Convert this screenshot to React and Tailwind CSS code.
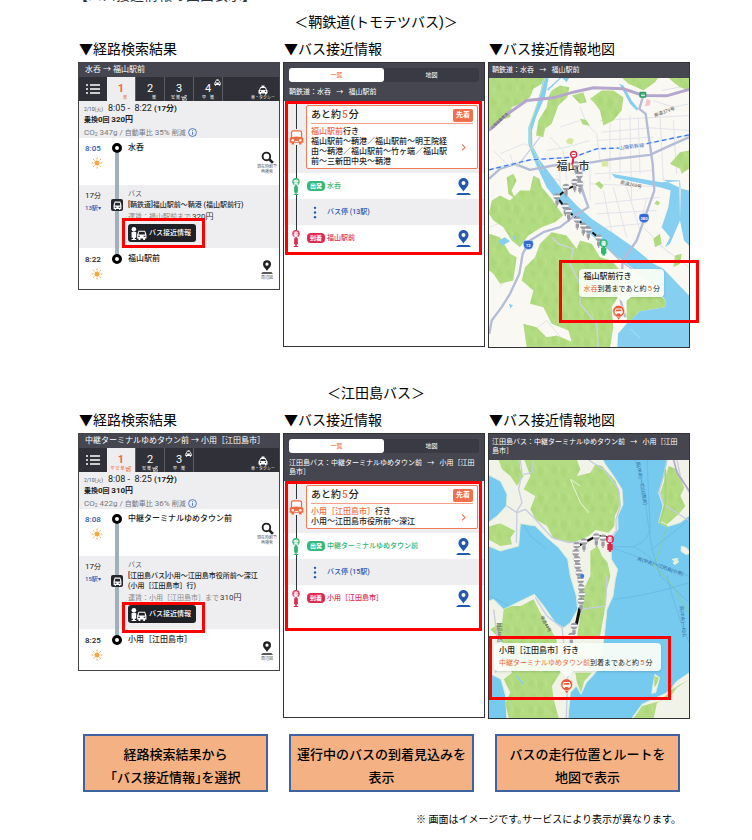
import clsx from "clsx";

const FONT = "font-['Roboto','Noto_Sans_CJK_JP',sans-serif]";

const routes = [
  {
    id: "tomotetsu",
    title: "＜鞆鉄道(トモテツバス)＞",
    header: "水呑 → 福山駅前",
    tabs: [
      { no: "1", marks: "　　楽" },
      { no: "2", marks: "　　楽" },
      { no: "3", marks: "安 楽", leaf: true },
      { no: "4", marks: "早　楽", car: true },
    ],
    depart: "8:05",
    arrive: "8:22",
    fare: "320円",
    co2: "347g",
    ratio: "35%",
    from: "水呑",
    to: "福山駅前",
    stops: "13",
    line: ["[鞆鉄道]福山駅前～鞆港 (福山駅前行)"],
    fareLabel: "運賃：福山駅前まで",
    nearHeader: "鞆鉄道：水呑 \u00a0\u00a0→ \u00a0\u00a0福山駅前",
    via: "福山駅前～鞆港／福山駅前～明王院経由～鞆港／福山駅前～竹ヶ端／福山駅前～三新田中央～鞆港",
  },
  {
    id: "etajima",
    title: "＜江田島バス＞",
    header: "中継ターミナルゆめタウン前 → 小用［江田島市］",
    tabs: [
      { no: "1", marks: "早 安 楽", leaf: true },
      { no: "2", marks: "安 楽", leaf: true },
      { no: "3", marks: "早　楽", car: true },
    ],
    depart: "8:08",
    arrive: "8:25",
    fare: "310円",
    co2: "422g",
    ratio: "36%",
    from: "中継ターミナルゆめタウン前",
    to: "小用［江田島市］",
    stops: "15",
    line: ["[江田島バス]小用～江田島市役所前～深江", "(小用［江田島市］行)"],
    fareLabel: "運賃：小用［江田島市］まで",
    nearHeader: "江田島バス：中継ターミナルゆめタウン前 \u00a0\u00a0→ \u00a0\u00a0小用［江田島市］",
    via: "小用～江田島市役所前～深江",
  },
];

const steps = [
  ["経路検索結果から", "「バス接近情報」を選択"],
  ["運行中のバスの到着見込みを", "表示"],
  ["バスの走行位置とルートを", "地図で表示"],
];

function CarIcon({ className }) {
  return (
    <svg viewBox="0 0 20 20" className={className} fill="currentColor" aria-hidden="true">
      <path d="M7 1h6v3H7z" />
      <path
        fillRule="evenodd"
        d="M5 4h10l3 6 1 1v6h-2v2h-3v-2H6v2H3v-2H1v-6l1-1zM6 6l-2 4h12l-2-4zM3.500 12.500a1.500 1.500 0 1 0 3 0 1.500 1.500 0 0 0-3 0zM13.500 12.500a1.500 1.500 0 1 0 3 0 1.500 1.500 0 0 0-3 0z"
      />
    </svg>
  );
}

function BusIcon({ className }) {
  return (
    <svg viewBox="0 0 24 24" className={className} aria-hidden="true">
      <path d="M3 12V5q0-4 4-4h10q4 0 4 4v7l2 2v7h-3v3h-4v-3H8v3H4v-3H1v-7z" fill="currentColor" />
      <path d="M5 12V5q0-2 2-2h10q2 0 2 2v7q-7-2-14 0z" fill="#fff" />
      <circle cx="6" cy="17" r="2" fill="#fff" />
      <circle cx="18" cy="17" r="2" fill="#fff" />
      <path d="M9 19h6" stroke="#fff" strokeWidth="1.500" />
    </svg>
  );
}

function SunIcon() {
  return (
    <svg viewBox="0 0 24 24" className="h-[12px] w-[12px] text-[#f5a742]" aria-hidden="true">
      <circle cx="12" cy="12" r="5" fill="currentColor" />
      <path
        d="M12 1v4M12 19v4M1 12h4M19 12h4M4 4l3 3M17 17l3 3M4 20l3-3M17 7l3-3"
        stroke="currentColor"
        strokeWidth="1.800"
      />
    </svg>
  );
}

function PinIcon({ className }) {
  return (
    <svg viewBox="0 0 30 34" className={className} fill="currentColor" aria-hidden="true">
      <path
        fillRule="evenodd"
        d="M15 0a10 10 0 0 1 10 10c0 7-7 11-10 17C12 21 5 17 5 10A10 10 0 0 1 15 0zm0 6a4 4 0 1 0 0 8 4 4 0 0 0 0-8z"
      />
      <path d="M0 34l4-4h22l4 4z" />
    </svg>
  );
}

function LeafIcon({ className }) {
  return (
    <svg viewBox="0 0 14 14" className={className} fill="none" stroke="currentColor" strokeWidth="1.500" aria-hidden="true">
      <path d="M1 4l4 2 3-4 5-1-2 5 2 6H3l1-4zM5 6l6 0M5 12l5-7" />
    </svg>
  );
}

function StopPost({ label, className }) {
  return (
    <svg viewBox="0 0 20 46" className={className} aria-hidden="true">
      <circle cx="10" cy="10" r="10" fill="currentColor" />
      <circle cx="10" cy="10" r="7" fill="#fff" opacity="0.300" />
      <text x="10" y="15" fontSize="13" fontWeight="700" textAnchor="middle" fill="#fff">{label}</text>
      <path d="M8 19h4v3h3v17h-3v4h4v3H4v-3h4v-4H5V22h3z" fill="currentColor" />
    </svg>
  );
}

function Ring() {
  return <span className="h-[10px] w-[10px] shrink-0 rounded-full border-[3px] border-black bg-white" />;
}

function Rail({ className }) {
  return <span className={clsx("w-[4px]", className)} />;
}

function SearchResult({ route }) {
  const second = route.line.length > 1;
  return (
    <article className="border border-[#444] bg-white text-[#222]">
      <p className="h-[14px] whitespace-nowrap bg-[#45464f] pl-[6px] text-[8px] leading-[13px] text-white">{route.header}</p>

      <nav className="flex h-[24px] bg-[#303138] text-white">
        <button type="button" aria-label="一覧" className="flex w-[28px] shrink-0 items-center justify-center">
          <svg viewBox="0 0 14 10" className="h-[10px] w-[14px]" stroke="currentColor" strokeWidth="1.500" aria-hidden="true">
            <path d="M0 1h2M4 1h10M0 5h2M4 5h10M0 9h2M4 9h10" />
          </svg>
        </button>
        {route.tabs.map((tab, i) => (
          <button
            key={tab.no}
            type="button"
            className={clsx(
              "relative w-[29px] shrink-0 border-r border-[#5c5d64]",
              i === 0 ? "bg-[#eeeef1] text-[#ee6a42]" : "text-white"
            )}
          >
            <span className={clsx("block pt-[4px] text-[11px] leading-[13px]", i === 0 && "font-bold")}>{tab.no}</span>
            <span className="flex h-[6px] items-center justify-center whitespace-pre text-[4px] leading-[6px]">
              {tab.marks}
              {tab.leaf ? <LeafIcon className="ml-px h-[6px] w-[6px]" /> : null}
            </span>
            {tab.car ? <CarIcon className="absolute right-[1px] top-[2px] h-[7px] w-[7px]" /> : null}
          </button>
        ))}
        <button type="button" className="ml-auto flex w-[32px] flex-col items-center pt-[8px]">
          <CarIcon className="h-[10px] w-[10px]" />
          <span className="whitespace-nowrap text-[4px] leading-[6px]">車・タクシー</span>
        </button>
      </nav>

      <div className="h-[37px] whitespace-nowrap bg-[#eeeef1] pl-[5px] pt-[2px]">
        <p className="text-[9px] leading-[11px]">
          <span className="mr-[5px] text-[5px] text-[#555]">2/10(火)</span>
          {route.depart} -&nbsp; {route.arrive} <span className="text-[8px] font-bold">(17分)</span>
        </p>
        <p className="text-[7px] font-bold leading-[10px]">
          乗換<span className="text-[8px]">0</span>回 <span className="text-[8px]">{route.fare}</span>
        </p>
        <p className="flex items-center text-[7px] leading-[12px] text-[#777]">
          <span className="text-[8px]">CO</span>
          <span className="pt-[3px] text-[5px]">2</span>
          <span className="mx-[2px] text-[8px]">{route.co2} /</span>
          自動車比 <span className="mx-[2px] text-[8px]">{route.ratio}</span> 削減
          <svg viewBox="0 0 16 16" className="ml-[2px] h-[9px] w-[9px] text-[#3566c8]" fill="none" stroke="currentColor" strokeWidth="1.500" aria-hidden="true">
            <circle cx="8" cy="8" r="7" />
            <path d="M8 7v5M8 4v1.500" />
          </svg>
        </p>
      </div>

      <div className="flex h-[47px] pl-[6px]">
        <div className="w-[26px] shrink-0 pt-[5px]">
          <p className="text-[8px] font-medium leading-[11px] text-[#2b5cb5]">{route.depart}</p>
          <div className="pl-[6px] pt-[3px]"><SunIcon /></div>
        </div>
        <div className="flex w-[12px] shrink-0 flex-col items-center pt-[5px]">
          <Ring />
          <Rail className="flex-1 bg-[#9fb0ba]" />
        </div>
        <p className="min-w-0 flex-1 whitespace-nowrap pl-[5px] pt-[4px] text-[8px] font-medium leading-[12px]">{route.from}</p>
        <button type="button" className="flex w-[24px] shrink-0 flex-col items-center pt-[13px]">
          <svg viewBox="0 0 24 24" className="h-[13px] w-[13px]" fill="none" stroke="currentColor" aria-hidden="true">
            <circle cx="10" cy="10" r="7" strokeWidth="3.500" />
            <path d="M15 15l7 7" strokeWidth="5" />
          </svg>
          <span className="whitespace-nowrap text-[4px] leading-[5px] text-[#555]">現在時刻で<br />再検索</span>
        </button>
      </div>

      <div className="flex bg-[#eeeef1] pb-[6px] pl-[6px]">
        <div className="w-[26px] shrink-0 pt-[5px] leading-[11px]">
          <p className="text-[8px]">17<span className="text-[7px]">分</span></p>
          <p className="whitespace-nowrap text-[6px] font-medium text-[#2b5cb5]">{route.stops}駅▾</p>
        </div>
        <div className="-mb-[6px] flex w-[12px] shrink-0 flex-col items-center">
          <Rail className={second ? "h-[19px] bg-[#9fb0ba]" : "h-[14px] bg-[#9fb0ba]"} />
          <span className="flex h-[12px] w-[12px] items-center justify-center rounded-[2px] bg-[#25262c] text-[#25262c]">
            <svg viewBox="0 0 16 16" className="h-[9px] w-[9px]" aria-hidden="true">
              <path d="M3 1h10l2 6v7h-2v2h-2v-2H5v2H3v-2H1V7z" fill="#fff" />
              <path d="M4 3h8l1 5H3z" fill="currentColor" />
              <path d="M3 11h3M10 11h3" stroke="currentColor" strokeWidth="2" />
            </svg>
          </span>
          <Rail className="flex-1 bg-[#9fb0ba]" />
        </div>
        <div className="min-w-0 flex-1 whitespace-nowrap pl-[5px] pt-[4px] text-[7px] leading-[10px]">
          <p className="text-[#666]">バス</p>
          <p className="mt-px font-medium">
            {route.line.map((text) => <span key={text} className="block">{text}</span>)}
          </p>
          <p className="mt-[2px] text-[#888]">{route.fareLabel}<span className="ml-px text-[8px] text-[#333]">{route.fare}</span></p>
          <div className="relative mt-[2px] w-fit">
            <button type="button" className="flex h-[18px] w-[68px] items-center gap-[2px] rounded-[3px] bg-[#202127] pl-[3px] text-white">
              <svg viewBox="0 0 34 28" className="h-[13px] w-[16px] shrink-0" fill="#fff" aria-hidden="true">
                <circle cx="6" cy="5" r="5" />
                <path d="M1 11h10v12H8v3h3v2H1v-2h3v-3H1z" />
                <path fillRule="evenodd" d="M16 8h14l3 8v9h-3v3h-4v-3h-6v3h-4v-3h-3v-9zm1 2l-1 6h14l-1-6zm-2 9v2h4v-2zm12 0v2h4v-2z" />
              </svg>
              <span className="text-[7px] font-medium leading-[10px]">バス接近情報</span>
            </button>
            <span
              className={clsx(
                "absolute -left-[6px] -right-[9px] border-[3px] border-[#f00]",
                second ? "-bottom-[10px] -top-[3px]" : "-bottom-[6px] -top-[6px]"
              )}
            />
          </div>
        </div>
      </div>

      <div className="flex h-[41px] pl-[6px]">
        <div className="w-[26px] shrink-0 pt-[6px]">
          <p className="text-[8px] font-medium leading-[11px]">{route.arrive}</p>
          <div className="pl-[6px] pt-[3px]"><SunIcon /></div>
        </div>
        <div className="flex w-[12px] shrink-0 flex-col items-center">
          <Rail className="h-[6px] bg-[#9fb0ba]" />
          <Ring />
        </div>
        <p className="min-w-0 flex-1 whitespace-nowrap pl-[5px] pt-[5px] text-[8px] font-medium leading-[12px]">{route.to}</p>
        <button type="button" className="flex w-[24px] shrink-0 flex-col items-center pt-[12px]">
          <PinIcon className="h-[14px] w-[12px]" />
          <span className="text-[4px] leading-[7px] text-[#555]">周辺図</span>
        </button>
      </div>
    </article>
  );
}

function StopRow({ kind, label, name }) {
  const start = kind === "start";
  return (
    <div className={clsx("flex h-[26px] items-center pl-[2px] pr-[13px]", start ? "text-[#2fb573]" : "text-[#dd2b50]")}>
      <div className="flex w-[20px] shrink-0 flex-col items-center self-stretch">
        <span className="w-px flex-1 bg-[#333]" />
        <StopPost label={start ? "発" : "着"} className="h-[17px] w-[8px]" />
        <span className={clsx("w-px flex-1", start && "bg-[#333]")} />
      </div>
      <span
        className={clsx(
          "ml-px flex h-[10px] w-[18px] shrink-0 items-center justify-center rounded-[4px] text-[6px] font-bold leading-[10px] text-white",
          start ? "bg-[#35b878]" : "bg-[#dd2b50]"
        )}
      >
        {label}
      </span>
      <span className="ml-[2px] flex-1 whitespace-nowrap text-[7px] font-medium leading-[10px]">{name}</span>
      <button type="button" aria-label={`${name}の地図`} className="text-[#2458ae]">
        <PinIcon className="h-[17px] w-[15px]" />
      </button>
    </div>
  );
}

function Approach({ route }) {
  return (
    <article className="flex h-[285px] flex-col border border-[#333] bg-white">
      <header className="bg-[#45464f] px-[5px] pb-[4px] pt-[5px] text-white">
        <div className="flex h-[14px] rounded-[3px] bg-[#393a43] text-[6px] leading-[14px]">
          <button type="button" className="flex-1 rounded-[3px] bg-white font-medium text-[#ee6a42]">一覧</button>
          <button type="button" className="flex-1">地図</button>
        </div>
        <p className="mt-[6px] pr-[3px] text-[7px] leading-[9px]">{route.nearHeader}</p>
      </header>

      <div className={clsx("relative", route.id === "etajima" && "pb-[16px]")}>
        <div className="flex bg-[#eeeef1] pl-[2px] pr-[6px]">
          <div className="flex w-[20px] shrink-0 flex-col items-center">
            <span className="w-px flex-1 bg-[#333]" />
            <BusIcon className="h-[16px] w-[15px] text-[#ee6a42]" />
            <span className="w-px flex-1 bg-[#333]" />
          </div>
          <div className="my-[4px] min-w-0 flex-1 rounded-[2px] border border-[#ee7a58] bg-white px-[4px] pb-px pt-[2px] text-[#222]">
            <div className="flex h-[16px] items-center justify-between border-b border-[#f4a08a] pb-px">
              <p className="text-[10px] font-medium leading-[12px]">あと約<span className="mx-px text-[#ee6a42]">5</span>分</p>
              <span className="rounded-[2px] bg-[#f0704c] px-[3px] text-[7px] font-bold leading-[13px] text-white">先着</span>
            </div>
            <div className="flex items-center pt-[3px]">
              <p className="w-[142px] text-[8px] font-medium leading-[10px]">
                <span className="text-[#ee6a42]">{route.to}</span>行き
                <br />
                {route.via}
              </p>
              <svg viewBox="0 0 6 10" className="ml-[8px] h-[7px] w-[5px]" fill="none" stroke="#ee6a42" strokeWidth="1.500" aria-hidden="true">
                <path d="M1 1l4 4-4 4" />
              </svg>
            </div>
          </div>
        </div>
        <StopRow kind="start" label="出発" name={route.from} />
        <div className="flex h-[26px] items-center bg-[#eeeef1] pl-[2px] text-[#2458ae]">
          <div className="flex w-[20px] justify-center self-stretch">
            <span className="w-px bg-[#333]" />
          </div>
          <svg viewBox="0 0 4 14" className="ml-[7px] h-[13px] w-[4px]" fill="currentColor" aria-hidden="true">
            <circle cx="2" cy="2" r="1.300" />
            <circle cx="2" cy="7" r="1.300" />
            <circle cx="2" cy="12" r="1.300" />
          </svg>
          <span className="ml-[10px] text-[7px] font-medium leading-[10px]">バス停 ({route.stops}駅)</span>
        </div>
        <StopRow kind="end" label="到着" name={route.to} />
        <span className="absolute -bottom-[4px] left-[1px] right-[2px] top-0 border-[3px] border-[#f00]" />
      </div>
    </article>
  );
}

function HillPattern({ id }) {
  return (
    <pattern id={id} width="70" height="80" patternUnits="userSpaceOnUse">
      <rect width="70" height="80" fill="#b3dc82" />
      <path d="M8 4l12 14-5 20-12-12zM34 10l16 12-6 26-14-18zM54 44l12 10-6 20-12-12zM14 48l14 8-4 18-14-10z" fill="#a8d375" opacity="0.600" />
      <path d="M22 6l8 12-2 14zM52 8l10 14-4 14zM38 56l8 8-4 12z" fill="#bee292" opacity="0.700" />
    </pattern>
  );
}

function GrayStop({ x, y }) {
  return (
    <g transform={`translate(${x} ${y})`}>
      <circle r="10" fill="#9c9da4" />
      <path d="M-10-3h20v5h-20z" fill="#fff" />
      <path d="M-5 11H5v13H2v6h-4v-6h-3z" fill="#9c9da4" />
    </g>
  );
}

function BusMarker({ x, y }) {
  return (
    <g transform={`translate(${x} ${y})`}>
      <path d="M0 26L-10 12H10z" fill="#ea5a38" />
      <circle r="18" fill="#ea5a38" stroke="#fff" strokeWidth="2" />
      <path d="M-9-8H9l3 7v8h-3v3H5V7H-5v3h-4V7h-3v-8z" fill="#fff" />
      <path d="M-7-5H7l2 5H-9z" fill="#ea5a38" />
    </g>
  );
}

function ColorStop({ x, y, color, label }) {
  return (
    <g transform={`translate(${x} ${y})`}>
      <path d="M-4 10h8v4h4v18H4v5h-8v-5h-4V14h4z" fill={color} />
      <circle r="12" fill={color} />
      <circle r="8" fill="#fff" opacity="0.300" />
      <text y="5" fontSize="13" fontWeight="700" textAnchor="middle" fill="#fff">{label}</text>
    </g>
  );
}

function RoadBadge({ x, y, text }) {
  return (
    <g transform={`translate(${x} ${y})`}>
      <path d="M-13-12Q0-16 13-12 18 0 11 10 0 18-11 10-18 0-13-12z" fill="#2e69d8" stroke="#fff" />
      <text y="5" fontSize="12" fontWeight="700" textAnchor="middle" fill="#fff">{text}</text>
    </g>
  );
}

const fukuyamaStops = [
  [288, 372], [298, 404], [284, 425], [300, 430], [258, 440], [231, 468],
  [256, 497], [266, 512], [292, 538], [310, 556], [325, 568], [356, 592],
];

function FukuyamaMap() {
  return (
    <svg viewBox="27 111 600 810" preserveAspectRatio="xMidYMid slice" className="absolute inset-0 h-full w-full" role="img" aria-label="福山市の地図">
      <defs><HillPattern id="hill-fukuyama" /></defs>
      <rect x="0" y="80" width="660" height="880" fill="#faf8f2" />

      <g fill="none" stroke="#e3e4ec" strokeWidth="3">
        <path d="M360 240L627 225M365 275L510 262 627 270M350 300L520 290M390 235V420M420 230V400M450 225L455 480M475 230L480 400M540 230L550 420M580 240L590 400M345 400L520 390M330 430L560 440M370 450L400 600M400 440L440 590M440 440L480 570M345 490L540 470M350 520L530 510M375 560L500 548M300 200L320 250 350 280 360 360M60 340L130 310 160 320M40 330L80 370M90 340L100 370M200 330L260 320 330 300M210 290L250 330 260 420M490 560L570 640M520 600L627 680M450 640L560 700" />
        <path d="M545 150L600 140M520 180L580 200 627 190M240 260L300 240M180 400L240 420M240 380V440M330 380V480M500 470L490 520M30 560L100 530 150 545M40 640L90 700 60 740M150 880L200 840 250 900" />
      </g>

      <g fill="url(#hill-fukuyama)">
        <path d="M27 111H190L186 130 160 145 150 170 120 190 95 200 90 230 60 240 45 260 27 270z" />
        <path d="M215 150L240 135 268 140 262 170 235 195 215 250 195 265 190 290 168 285 175 240 200 200 205 170z" />
        <path d="M330 175L365 150 400 150 430 170 425 210 400 240 370 255 360 210 345 190z" />
        <path d="M425 111H535L525 125 490 150 470 140 445 130zM565 111H627V150L600 140 580 125zM275 165L310 155 320 185 300 190zM300 235l18 3 12 18-22-4z" />
        <path d="M570 370L600 335 627 330V385L605 400 600 385zM345 430l12-8 14 14-8 10z" />
        <path d="M80 410L100 400 110 420 95 450 105 475 85 460z" />
        <path d="M160 405L178 415 185 440 215 475 232 500 250 525 225 545 185 560 145 585 120 620 95 600 70 560 40 540 27 520 35 480 60 465 90 480 120 450 150 450z" />
        <path d="M27 580L60 590 90 640 110 650 100 720 60 730 40 700 27 690z" />
        <path d="M215 575L260 585 290 625 300 600 335 610 360 650 395 660 420 690 420 760 395 800 400 860 390 921H280L265 870 215 850 190 800 150 790 160 750 125 720 135 680 165 650 180 610z" />
        <path d="M130 850L170 860 200 890 230 885 280 905 285 921H140zM530 480l10 5-5 10-12-5z" />
        <path d="M440 775L490 755 540 765 557 780 555 800 480 812 440 850zM520 595L540 580 545 610 525 620zM585 645L605 640 600 670 580 680z" />
      </g>

      <g fill="#86cff0">
        <path d="M190 111H206L196 165 168 230 156 270 157 315 182 362 212 402 248 450 290 495 335 535 400 578 460 620 520 670 550 685 627 765V921H412L414 880 440 850 480 812 555 800 557 780 530 745 480 700 400 640 330 580 275 525 235 485 200 440 168 372 145 310 145 260 160 225 182 150z" />
        <path d="M550 418L600 420 602 450 600 540 612 600 627 615V570 450L605 445zM543 425L395 400 405 412 540 440 572 450 565 500 545 560 570 590 555 620 570 610 600 540 598 422z" />
        <path d="M430 135L447 165 455 180 475 205 470 210 450 190 418 130zM55 600l20-10 15 12-25 14zM96 585l12 4-5 10zM87 790l12 4-8 10zM260 125L245 111 205 150 200 148 240 111h28z" />
      </g>
      <path d="M195 111L175 180 150 250 150 310 190 390" fill="none" stroke="#bfe5ba" strokeWidth="3" />
      <path d="M450 865L480 892" stroke="#bfe4f5" strokeWidth="2" />

      <g fill="none" stroke="#b4bcd7" strokeWidth="7" strokeLinejoin="round">
        <path d="M27 415L60 385 105 370 150 388 220 375 320 368 390 357 510 343 560 320 627 290" />
        <path d="M490 165L478 205 497 220 508 300 518 370 523 450 495 530 470 600 428 660 422 780 436 830" />
        <path d="M300 430L310 460 325 500 285 525 240 560 190 575 150 600 128 640 118 700 90 760 65 800 35 840 28 880" />
        <path d="M325 500L300 420 310 380M350 590L420 660 560 760" strokeWidth="4" />
        <path d="M216 590L235 610 280 625 270 670 300 730 300 790 350 850 355 921M110 380L180 290" stroke="#ccd1e4" strokeWidth="4" />
      </g>
      <path d="M27 270L80 222 140 180 220 172 280 155 340 142 430 145 490 165 560 166 627 147" fill="none" stroke="#b5a6cd" strokeWidth="9" />
      <path d="M27 388L150 358 280 350 350 325 440 322 627 283" fill="none" stroke="#dbe7ff" strokeWidth="5" />
      <path d="M27 388L150 358 280 350 350 325 440 322 627 283" fill="none" stroke="#3e7cea" strokeWidth="4" strokeDasharray="14 9" />
      <path d="M257 300l12-8 13 5-6 15-15-3zM365 362h20v16h-20z" fill="#d8e8a0" />

      <path d="M500 175l12 5-3 15-14 2z" fill="#f5c4cd" />
      <rect x="478" y="154" width="21" height="18" rx="4" fill="#28a065" />
      <path d="M483 165h12M486 159v9M492 159v9" stroke="#fff" strokeWidth="2" />

      <text x="279" y="387" fontSize="33" fontWeight="500" textAnchor="middle" fill="#333" stroke="#fff" strokeWidth="3" paintOrder="stroke">福山市</text>
      <text x="418" y="328" fontSize="15" fill="#3d6fc9" stroke="#faf8f2" strokeWidth="5" paintOrder="stroke" transform="rotate(-7 418 328)">山陽新幹線</text>
      <text x="524" y="230" fontSize="14" fill="#555" transform="rotate(-20 524 230)">県道379号</text>
      <text x="420" y="430" fontSize="14" fill="#555" transform="rotate(12 420 430)">県道260号</text>
      <text x="36" y="266" fontSize="11" fill="#555" transform="rotate(-42 36 266)">山陽自動車道</text>
      <RoadBadge x={145} y={613} text="72" />
      <RoadBadge x={492} y={533} text="380" />

      <path d="M290 380L298 430 262 445 231 470 262 510 356 592 371 610" fill="none" stroke="#111" strokeWidth="6" strokeDasharray="26 9" />
      {fukuyamaStops.map(([x, y]) => <GrayStop key={`${x}-${y}`} x={x} y={y} />)}
      <path d="M280 352l-3 20" stroke="#de2447" strokeWidth="6" />
      <circle cx="281" cy="342" r="9" fill="#fff" stroke="#de2447" strokeWidth="4" />
      <path d="M277 342h8" stroke="#de2447" strokeWidth="3" />
      <ColorStop x={371} y={608} color="#2eb872" label="発" />
      <BusMarker x={416} y={812} />
    </svg>
  );
}

const etajimaStops = [
  [348, 382], [368, 386], [311, 397], [289, 408], [286, 430], [290, 450],
  [292, 470], [296, 490], [301, 512], [303, 535], [304, 555], [302, 575], [281, 650], [273, 680],
];

function EtajimaMap() {
  return (
    <svg viewBox="24 152 604 774" preserveAspectRatio="xMidYMid slice" className="absolute inset-0 h-full w-full" role="img" aria-label="江田島市の地図">
      <defs><HillPattern id="hill-etajima" /></defs>
      <rect x="0" y="120" width="660" height="840" fill="#76c9ef" />

      <g fill="#f1f3e8" stroke="#d9ecdc" strokeWidth="3">
        <path d="M10 120H350L375 165 400 200 425 240 428 285 412 320 413 360 398 380 392 410 393 450 412 480 405 510 398 560 380 600 372 680 355 780 318 820 302 855 288 830 270 850 262 940H80L76 860 62 810 24 790 10 580 40 570 70 600 110 580 162 555 190 590 225 640 250 655 270 640 292 600 288 560 270 500 262 450 235 415 200 385 165 350 120 343 115 410 60 425 24 410 10 350 50 320 78 290 80 255 60 215 10 190z" />
        <path d="M563 140H650V300L600 340 560 352 535 340 548 290 535 250 550 200z" />
        <path d="M627 790L590 815 560 850 485 885 445 940H650z" />
        <path d="M603 410l15 5 12 15-12 6-16-10zM578 460l12-10 5 8-12 8zM524 795l14 10-12 45-12 2 4-25zM575 450l18-3-5 12z" />
      </g>

      <g fill="url(#hill-etajima)">
        <path d="M132 152H290L300 180 290 200 330 190 345 165 365 170 405 215 418 250 420 285 404 320 402 350 385 370 345 362 325 380 280 400 220 390 200 350 165 330 150 300 165 260 130 240 150 200z" />
        <path d="M55 152H118L120 180 130 200 110 230 90 200 65 180z" />
        <path d="M24 352L60 342 105 365 90 385 95 405 60 410 24 390z" />
        <path d="M330 425L352 410 365 440 382 460 390 500 380 540 375 590 370 620 358 685H290L303 600 310 540 330 500z" />
        <path d="M70 600L95 590 120 590 160 570 180 610 205 650 228 690 240 790 215 830 220 870 235 926H85L75 880 90 850 70 810 95 790 80 720 60 690z" />
        <path d="M285 790H335L312 815 302 850 290 820zM30 660L60 640 70 670 50 680z" />
        <path d="M565 170L590 180 612 235 600 260 615 290 595 315 560 345 538 335 552 290 540 250 552 215z" />
        <path d="M627 810L590 835 570 860 530 880 520 926H460L485 890 540 875 575 840zM522 800l14 5-8 22-6 6z" />
      </g>

      <g fill="none" stroke="#c7cce2" strokeWidth="4">
        <path d="M120 152L125 190 115 240 125 280 110 305 108 400M80 290L110 310 135 300 165 330 215 385 265 400 300 398M160 152L155 190 130 195" />
        <path d="M325 152L375 185 415 240 420 290 407 330 408 365 390 385M300 600L375 590 380 500M165 565L200 620 245 655 262 800 258 926M40 600L60 760 45 790" />
        <path d="M560 152L550 200 537 245 550 285 627 335M590 152L600 200 627 250" />
      </g>
      <path d="M580 152L590 190 627 245" fill="none" stroke="#b5a6cd" strokeWidth="5" />
      <path d="M560 350L535 430 522 470 570 520 627 610" fill="none" stroke="#82cdb0" strokeWidth="4" />
      <path d="M555 180V280L538 340 560 350" fill="none" stroke="#a4d678" strokeWidth="5" />
      <path d="M300 230L270 210 300 280 325 310" fill="none" stroke="#e9f2da" strokeWidth="3" />
      <path d="M108 800L130 825" stroke="#8bcfe4" strokeWidth="5" />

      <g fill="none" stroke="#5aafdd" strokeWidth="1.500">
        <path d="M465 152L490 230 503 340 515 420 540 500 627 580M395 412H460Q500 395 508 365M460 412Q500 430 545 480M395 415L627 500M400 570Q500 560 627 520M510 370L500 152M515 420L627 330M560 500Q590 620 627 700M30 560L85 590M130 345L150 380 200 420" />
      </g>
      <g fill="#2f6ba3" fontSize="14">
        <text x="468" y="158" transform="rotate(80 468 158)">呉(中央)～松山(高浜)</text>
        <text x="470" y="452" transform="rotate(19 470 452)">呉(中央)～江田島(小用)</text>
        <text x="598" y="590" transform="rotate(84 598 590)">呉(中央)～松山</text>
      </g>
      <text x="54" y="640" fontSize="13" fill="#555" transform="rotate(90 54 640)">国道487号</text>
      <text x="180" y="622" fontSize="13" fill="#555" transform="rotate(62 180 622)">県道44号</text>

      <path d="M388 390L370 380 345 382 310 400 290 412" fill="none" stroke="#111" strokeWidth="7" />
      <path d="M299 595L288 645" stroke="#111" strokeWidth="9" />
      {etajimaStops.map(([x, y]) => <GrayStop key={`${x}-${y}`} x={x} y={y} />)}
      <circle cx="306" cy="500" r="6" fill="#2e7ae8" />
      <ColorStop x={389} y={390} color="#de2447" label="着" />
      <BusMarker x={259} y={826} />
    </svg>
  );
}

function MapPanel({ route }) {
  const fukuyama = route.id === "tomotetsu";
  return (
    <article className="flex h-[286px] flex-col border border-[#333] bg-white">
      <p className={clsx("bg-[#45464f] pl-[3px] pr-[8px] text-[7px] leading-[9px] text-white", fukuyama ? "py-[3px]" : "py-[4px]")}>
        {route.nearHeader}
      </p>
      <div className="relative flex-1">
        {fukuyama ? <FukuyamaMap /> : <EtajimaMap />}
        <div
          className={clsx(
            "absolute whitespace-nowrap rounded-[4px] bg-[#f8fdf5]/95 py-[2px] pl-[5px] text-[#222] shadow-sm",
            fukuyama ? "bottom-[50px] right-[25px] pr-[4px]" : "bottom-[47px] left-[5px] pr-[9px]"
          )}
        >
          <p className="text-[8px] font-medium leading-[12px]">{route.to}行き</p>
          <p className="text-[7px] leading-[11px]">
            <span className="text-[#ee6a42]">{route.from}</span>到着まであと約<span className="mx-px text-[8px] text-[#ee6a42]">5</span>分
          </p>
          <svg
            viewBox="0 0 14 6"
            className={clsx("absolute -bottom-[6px] h-[6px] w-[14px]", fukuyama ? "left-[38px]" : "left-[66px]")}
            aria-hidden="true"
          >
            <path d="M0 0h14L7 6z" fill="#f8fdf5" />
          </svg>
        </div>
        <span
          className={clsx(
            "absolute border-[3px] border-[#f00]",
            fukuyama ? "-right-[10px] bottom-[24px] left-[70px] h-[63px]" : "bottom-[18px] left-0 right-[18px] h-[64px]"
          )}
        />
      </div>
    </article>
  );
}

function Column({ heading, children }) {
  return (
    <div className="min-w-0">
      <h3 className="mb-[3px] whitespace-nowrap pl-[1px] text-[14px] leading-[20px]">{heading}</h3>
      {children}
    </div>
  );
}

function RouteSection({ route, className }) {
  return (
    <section className={className}>
      <h2 className="mb-[7px] text-center text-[14px] leading-[20px]">{route.title}</h2>
      <div className="grid grid-cols-3 items-start gap-[3px] pl-[78px] pr-[62px]">
        <Column heading="▼経路検索結果"><SearchResult route={route} /></Column>
        <Column heading="▼バス接近情報"><Approach route={route} /></Column>
        <Column heading="▼バス接近情報地図"><MapPanel route={route} /></Column>
      </div>
    </section>
  );
}

export default function App() {
  return (
    <main className={clsx(FONT, "bg-white pb-[12px] text-black")} lang="ja">
      <div className="flex h-[3px] items-end overflow-hidden pl-[74px]">
        <p className="text-[14px] leading-[16px] text-[#333]">【バス接近情報の画面表示】</p>
      </div>
      <RouteSection route={routes[0]} className="mt-[9px]" />
      <RouteSection route={routes[1]} className="mt-[35px]" />

      <div className="mt-[15px] grid grid-cols-3 gap-[21px] pl-[83px] pr-[72px]">
        {steps.map((lines) => (
          <p key={lines[0]} className="whitespace-nowrap border-2 border-[#3f62a0] bg-[#f4b183] pb-px pt-[7px] text-center text-[13px] font-medium leading-[23px] [font-feature-settings:'halt']">
            {lines.map((line) => <span key={line} className="block">{line}</span>)}
          </p>
        ))}
      </div>
      <p className="mt-[20px] pr-[76px] text-right text-[10px] leading-[16px] [font-feature-settings:'halt']">※ 画面はイメージです。サービスにより表示が異なります。</p>
    </main>
  );
}
